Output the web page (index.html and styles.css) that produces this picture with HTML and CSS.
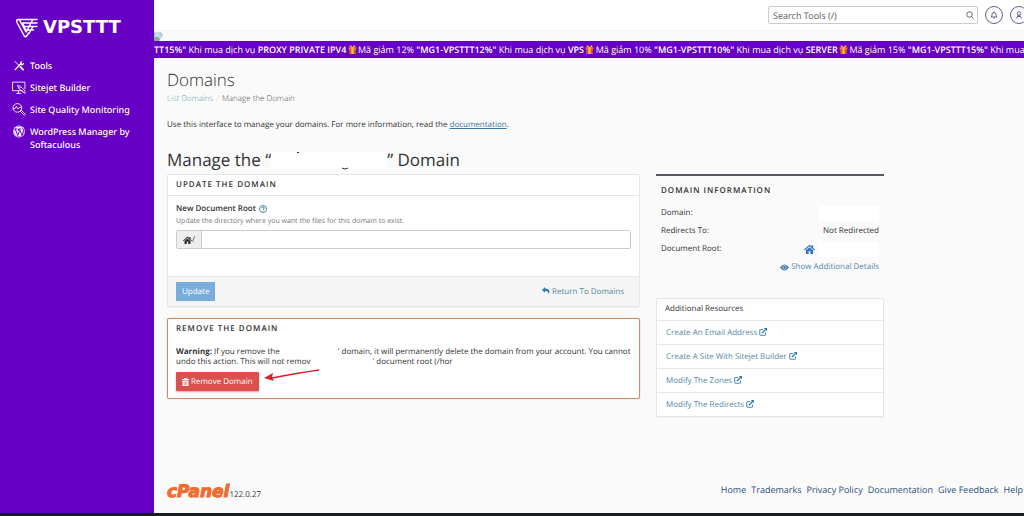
FILE: index.html
```html
<!DOCTYPE html>
<html lang="en">
<head>
    <meta charset="utf-8">
    <title>Manage the Domain</title>
    <link rel="stylesheet" href="styles.css">
</head>
<body>
    <svg class="sprite" aria-hidden="true">
        <symbol id="gift" viewBox="0 0 16 16">
            <rect x="2" y="6" width="12" height="10" fill="#d9512c"/>
            <rect x="1" y="4" width="14" height="4" fill="#ef6a3a"/>
            <rect x="6" y="4" width="4" height="12" fill="#f7c948"/>
            <path d="M8 4C6 0 2 0 3 3c1 1 3 1 5 1zm0 0c2-4 6-4 5-1-1 1-3 1-5 1z" fill="#f7b733"/>
        </symbol>
        <symbol id="external" viewBox="0 0 16 16">
            <path d="M8 3H2.500Q1.500 3 1.500 4v9.500q0 1 1 1H12q1 0 1-1V9" fill="none" stroke="currentColor" stroke-width="1.800"/>
            <path d="M6 10l7-7" stroke="currentColor" stroke-width="2.400"/>
            <path d="M9.500 0H16v6.500z" fill="currentColor"/>
        </symbol>
        <symbol id="home" viewBox="0 0 18 16">
            <path d="M9 1L0 9l1.200 1.300L9 3.500l7.800 6.800L18 9l-3-2.700V2h-2.500v2z" fill="currentColor"/>
            <path d="M9 5l6 5.200V16h-4.500v-4.500h-3V16H3v-5.800z" fill="currentColor"/>
        </symbol>
    </svg>

    <div class="layout">
        <aside class="sidebar">
            <a class="brand" href="#">
                <svg class="brand-mark" viewBox="0 0 48 40" fill="none" stroke="#fff" stroke-width="3" stroke-linejoin="round" stroke-linecap="round">
                    <path d="M9 3h35M9 3Q1 2 4 9l14 26q3 5 6 0l3-5"/>
                    <path d="M9 4l13 24M15 10h29M20 17h24M24 24h13M15 10l8 17 12-23M28 31l8-14"/>
                </svg>
                <span>VPSTTT</span>
            </a>
            <nav class="menu">
                <a href="#">
                    <svg class="tools" viewBox="0 0 24 24" fill="none" stroke="#fff" stroke-linecap="round">
                        <path d="M4 21L14 10" stroke-width="3"/>
                        <path d="M20 2l-3 4 2 2 4-2q0 6-6 6-4-1-3-6 1-4 6-4z" fill="#fff" stroke="none"/>
                        <path d="M3 3l9 9" stroke-width="2"/>
                        <path d="M15 15l6 6" stroke-width="4"/>
                    </svg>
                    <span>Tools</span>
                </a>
                <a href="#">
                    <svg viewBox="0 0 26 24" fill="none" stroke="#fff" stroke-width="1.600">
                        <path d="M20 18H1V2h23v13M8 23h9M12 18v5"/>
                        <path d="M10 8l3 6 8 7 3-3-8-8zM13 14l3-3M21 21l3 2 1-3"/>
                    </svg>
                    <span>Sitejet Builder</span>
                </a>
                <a href="#">
                    <svg viewBox="0 0 26 24" fill="none" stroke="#fff" stroke-width="1.600">
                        <circle cx="10" cy="9" r="8"/>
                        <path d="M1 11l5-1 2-4 3 5 3-3h4M15 15l2-2 8 8-2 2z"/>
                    </svg>
                    <span>Site Quality Monitoring</span>
                </a>
                <a href="#">
                    <svg viewBox="0 0 26 26">
                        <circle cx="13" cy="13" r="12" fill="#fff"/>
                        <circle cx="13" cy="13" r="10.500" fill="none" stroke="#6600c5" stroke-width="1"/>
                        <path d="M4 8h6M5.500 8l5 13 3-8-2-5h6M14 8l5 13 3-9q0-3-2-5" fill="none" stroke="#6600c5" stroke-width="2"/>
                    </svg>
                    <span>WordPress Manager by Softaculous</span>
                </a>
            </nav>
        </aside>

        <div class="page">
            <header class="topbar">
                <div class="search">
                    <input type="search" aria-label="Search Tools" placeholder="Search Tools (/)">
                    <svg viewBox="0 0 16 16" fill="none" stroke="#444" stroke-width="1.600">
                        <circle cx="7" cy="7" r="5.500"/>
                        <path d="M11 11l4 4"/>
                    </svg>
                </div>
                <button class="round" type="button" aria-label="Notifications">
                    <svg viewBox="0 0 16 16" fill="none" stroke="#3b3270" stroke-width="1.500">
                        <path d="M2 12q2-1 2-5 0-4 4-4t4 4q0 4 2 5zM8 1v2M6.500 14h3"/>
                    </svg>
                </button>
                <button class="round" type="button" aria-label="Account">
                    <svg viewBox="0 0 16 16" fill="none" stroke="#4b2c9b" stroke-width="1.500">
                        <circle cx="8" cy="5" r="3.500"/>
                        <path d="M3 15l4-7M13 15L9 8M5 12q3-3 6 0"/>
                    </svg>
                </button>
            </header>

            <div class="banner">
                <svg viewBox="0 0 16 16">
                    <path d="M0 0h11l5 5v11H0z" fill="#c5dbe9"/>
                    <path d="M0 16V11q5-5 9-1l3 6z" fill="#7fae90"/>
                    <path d="M11 0v5h5M1 1v14" fill="none" stroke="#8b9da8"/>
                    <path d="M9 16l7-8v8z" fill="#fff"/>
                </svg>
            </div>
            <div class="ticker">
                <b>TT15%"</b> Khi mua dịch vụ <b>PROXY PRIVATE IPV4</b>
                <svg><use href="#gift"/></svg> Mã giảm 12% <b>"MG1-VPSTTT12%"</b> Khi mua dịch vụ <b>VPS</b>
                <svg><use href="#gift"/></svg> Mã giảm 10% <b>"MG1-VPSTTT10%"</b> Khi mua dịch vụ <b>SERVER</b>
                <svg><use href="#gift"/></svg> Mã giảm 15% <b>"MG1-VPSTTT15%"</b> Khi mua
            </div>

            <main class="content">
                <h1>Domains</h1>
                <div class="breadcrumb"><a href="#">List Domains</a><i>/</i><span>Manage the Domain</span></div>
                <p class="intro">Use this interface to manage your domains. For more information, read the <a href="#">documentation</a>.</p>
                <h2>Manage the “<svg class="blank-title" viewBox="0 0 116 20">
                        <path d="M0 2h116v16H0z" fill="#fff"/>
                        <path d="M26 2h2v1h-2z" fill="#333"/>
                        <path d="M71 18q3 2 6 0" fill="none" stroke="#333"/>
                    </svg>” Domain</h2>

                <div class="columns">
                    <div class="forms">
                        <form class="card">
                            <h3>Update the Domain</h3>
                            <div class="card-body">
                                <label for="docroot">New Document Root
                                    <svg viewBox="0 0 16 16" fill="none" stroke="#38799f" stroke-width="1.800">
                                        <circle cx="8" cy="8" r="7"/>
                                        <path d="M5.500 6.500q0-2.500 2.500-2.500t2.500 2.200Q10.500 8 8 9v1M8 11.500V13"/>
                                    </svg>
                                </label>
                                <p class="hint">Update the directory where you want the files for this domain to exist.</p>
                                <div class="input-group">
                                    <span><svg><use href="#home"/></svg>/</span>
                                    <input type="text" id="docroot">
                                </div>
                            </div>
                            <div class="card-footer">
                                <button class="btn btn-primary" type="button">Update</button>
                                <a href="#">
                                    <svg viewBox="0 0 16 14"><path d="M6 0v3q9 0 9 7 0 2-2 4 1-6-7-6v3.500L0 6z" fill="#3479ad"/></svg>
                                    Return To Domains</a>
                            </div>
                        </form>

                        <section class="card card-danger">
                            <h3>Remove the Domain</h3>
                            <p><b>Warning:</b> If you remove the<span class="blank blank-name"></span>' domain, it will permanently delete the domain from your account. You cannot<br>
                            undo this action. This will not remov<span class="blank blank-root"></span>' document root (/hor</p>
                            <div class="actions">
                                <button class="btn btn-danger" type="button">
                                    <svg viewBox="0 0 14 16" fill="#fff"><path d="M4 0h6v2h4v2H0V2h4zM1 5h12v11H1z"/><path d="M4.500 7v7M7 7v7M9.500 7v7" stroke="#d24a48"/></svg>
                                    Remove Domain</button>
                                <svg class="arrow" viewBox="0 0 56 12">
                                    <path d="M8 9Q34 4 55 1" fill="none" stroke="#d3222a" stroke-width="1.500"/>
                                    <path d="M0 9l9-5-1 4 2 4z" fill="#d3222a"/>
                                </svg>
                            </div>
                        </section>
                    </div>

                    <aside class="side">
                        <section class="info">
                            <h3>Domain Information</h3>
                            <dl>
                                <dt>Domain:</dt><dd><span class="blank blank-value"></span></dd>
                                <dt>Redirects To:</dt><dd>Not Redirected</dd>
                                <dt>Document Root:</dt><dd><a href="#" aria-label="Document root"><svg><use href="#home"/></svg></a><span class="blank blank-value"></span></dd>
                            </dl>
                            <a class="more" href="#">
                                <svg viewBox="0 0 18 12"><path d="M0 6q9-12 18 0-9 12-18 0z" fill="#3479ad"/><circle cx="9" cy="6" r="3.500" fill="none" stroke="#fff" stroke-width="1.300"/></svg>
                                Show Additional Details</a>
                        </section>

                        <section class="card resources">
                            <h4>Additional Resources</h4>
                            <a href="#">Create An Email Address <svg><use href="#external"/></svg></a>
                            <a href="#">Create A Site With Sitejet Builder <svg><use href="#external"/></svg></a>
                            <a href="#">Modify The Zones <svg><use href="#external"/></svg></a>
                            <a href="#">Modify The Redirects <svg><use href="#external"/></svg></a>
                        </section>
                    </aside>
                </div>
            </main>

            <footer class="footer">
                <div class="version"><b>cPanel</b><span>122.0.27</span></div>
                <nav>
                    <a href="#">Home</a>
                    <a href="#">Trademarks</a>
                    <a href="#">Privacy Policy</a>
                    <a href="#">Documentation</a>
                    <a href="#">Give Feedback</a>
                    <a href="#">Help</a>
                </nav>
            </footer>
        </div>
    </div>
</body>
</html>
```
FILE: styles.css
```css
* { box-sizing: border-box; }
body { margin: 0; font: 8px/12px "Open Sans", "Noto Sans", sans-serif; color: #333; background: #fafafa; text-rendering: geometricPrecision; }
h1, h2, h3, h4, p, dl, dd { margin: 0; }
a { color: #5688a0; text-decoration: none; }
button, input { font: inherit; text-rendering: inherit; }
svg { flex: none; }
.sprite { display: none; }

.layout { display: flex; min-height: 100vh; border-bottom: 3px solid #1b1c20; }

/* sidebar */
.sidebar { flex: none; width: 154px; padding-top: 17px; background: #6600c5; }
.brand { display: flex; align-items: center; gap: 4px; padding-left: 15px; height: 22px; color: #fff; font: bold 18px/22px "DejaVu Sans", sans-serif; }
.brand-mark { width: 24px; height: 20px; }
.menu { display: flex; flex-direction: column; gap: 9px; padding: 20px 12px 0 12px; }
.menu a { display: flex; gap: 4px; color: #fff; font: 500 9px/13px "Noto Sans", sans-serif; }
.menu svg { width: 14px; height: 13px; }
.menu .tools { height: 11px; margin-top: 1px; }

/* top bar */
.page { flex: 1; min-width: 0; display: flex; flex-direction: column; overflow: hidden; }
.topbar { display: flex; justify-content: flex-end; align-items: center; gap: 7px; height: 31px; margin-right: -4px; background: #fff; border-bottom: 1px solid #f3f3f3; }
.search { position: relative; width: 210px; }
.search input { display: block; width: 100%; height: 18px; padding: 0 20px 0 4px; border: 1px solid #ccc; border-radius: 2px; background: #fff; color: #555; font: 9px/16px "Noto Sans", sans-serif; }
.search input::placeholder { color: #666; }
.search svg { position: absolute; right: 4px; top: 5px; width: 8px; height: 8px; }
.round { display: flex; align-items: center; justify-content: center; flex: none; width: 18px; height: 18px; padding: 0; border: 1px solid #6b5b86; border-radius: 50%; background: #fff; }
.round svg { width: 8px; height: 8px; }
.banner { height: 10px; }
.banner svg { display: block; width: 9px; height: 9px; margin-top: 1px; }
.ticker { height: 17px; overflow: hidden; white-space: nowrap; background: #6600c5; color: #fff; font: 9px/17px "Open Sans", "Noto Sans", sans-serif; }
.ticker b { font-weight: 600; }
.ticker svg { width: 9px; height: 9px; margin: 0 -1px; vertical-align: -1px; }

/* content */
.content { flex: 1; max-width: 730px; padding: 11px 0 0 13px; }
h1 { font-size: 17px; line-height: 22px; font-weight: 300; }
.breadcrumb { display: flex; gap: 3px; margin-top: 2px; color: #555; font-weight: 300; }
.breadcrumb a { color: #6c9bad; }
.breadcrumb i { color: #ccc; }
.intro { margin-top: 14px; }
.intro a { color: #38799f; text-decoration: underline; }
h2 { display: flex; align-items: center; margin: 18px 0 3px; font-size: 17px; line-height: 22px; font-weight: 500; white-space: pre; }
h3 { font-size: 8px; line-height: 12px; font-weight: 600; letter-spacing: 1px; text-transform: uppercase; }
.blank { display: inline-block; background: #fff; }
.blank-title { width: 116px; height: 20px; }
.blank-name { width: 58px; }
.blank-root { width: 62px; }
.blank-value { width: 60px; height: 15px; }

.columns { display: grid; grid-template-columns: minmax(0, 1fr) 228px; gap: 16px; align-items: start; }
.forms { display: flex; flex-direction: column; gap: 11px; }
.card { background: #fff; border: 1px solid #e6e6e6; border-radius: 2px; box-shadow: 0 1px 1px rgba(0,0,0,0.05); }
.card h3 { padding: 4px 8px; }
form.card h3 { border-bottom: 1px solid #e6e6e6; }
.card-body { padding: 7px 8px 27px; }
.card-body label { display: flex; align-items: center; gap: 3px; font-weight: 600; }
.card-body label svg { width: 8px; height: 8px; }
.hint { margin: 1px 0 2px; color: #777; font-size: 7px; }
.input-group { display: flex; height: 19px; border: 1px solid #ccc; border-radius: 2px; }
.input-group span { display: flex; align-items: center; justify-content: center; width: 25px; background: #eee; border-right: 1px solid #ccc; }
.input-group svg { width: 9px; height: 8px; }
.input-group input { flex: 1; min-width: 0; border: 0; padding: 0 4px; background: #fff; }
.card-footer { display: flex; justify-content: space-between; align-items: center; padding: 5px 15px 5px 8px; background: #f5f5f5; border-top: 1px solid #e6e6e6; }
.card-footer a svg { width: 8px; height: 7px; }
.btn { display: flex; align-items: center; gap: 2px; height: 19px; padding: 0 6px; border: 0; color: #fff; white-space: nowrap; }
.btn svg { width: 7px; height: 8px; }
.btn-primary { background: #78addc; }
.btn-danger { background: #d9504e; border-radius: 1px; box-shadow: 0 1px 2px rgba(0,0,0,0.3); }
.card-danger { border-color: #c98e62; padding-bottom: 7px; box-shadow: 0 0 1px #c98e62; }
.card-danger p { padding: 8px 8px 5px; line-height: 10px; white-space: nowrap; }
.actions { display: flex; gap: 5px; padding-left: 8px; }
.arrow { width: 56px; height: 12px; margin-top: -3px; }

.info { border-top: 2px solid #5c5861; padding: 9px 5px 25px; }
.info dl { display: grid; grid-template-columns: auto 1fr; grid-auto-rows: 18px; align-items: center; margin-top: 7px; }
.info dd { display: flex; justify-content: flex-end; align-items: center; }
.info dd svg { display: block; width: 11px; height: 10px; margin-right: 4px; color: #3479c0; }
.more { display: flex; justify-content: flex-end; align-items: center; gap: 2px; padding-top: 3px; }
.more svg { width: 9px; height: 7px; }
.resources h4 { padding: 4px 8px 5px; font-size: 8px; line-height: 12px; font-weight: 400; }
.resources a { display: block; padding: 6px 9px; border-top: 1px solid #e6e6e6; line-height: 12px; height: 24px; }
.resources svg { width: 8px; height: 8px; color: #3479ad; vertical-align: -1px; }

/* footer */
.footer { display: flex; justify-content: space-between; align-items: center; padding: 0 1px 10px 13px; }
.version { display: flex; align-items: flex-end; }
.version b { color: #f06c2e; font: italic bold 17px/22px "DejaVu Sans", sans-serif; -webkit-text-stroke: 1px #f06c2e; }
.version span { line-height: 16px; }
.footer nav { display: flex; gap: 5px; padding-bottom: 5px; }
.footer nav a { color: #2f4f80; font: 9px/12px "Open Sans", sans-serif; }
```
